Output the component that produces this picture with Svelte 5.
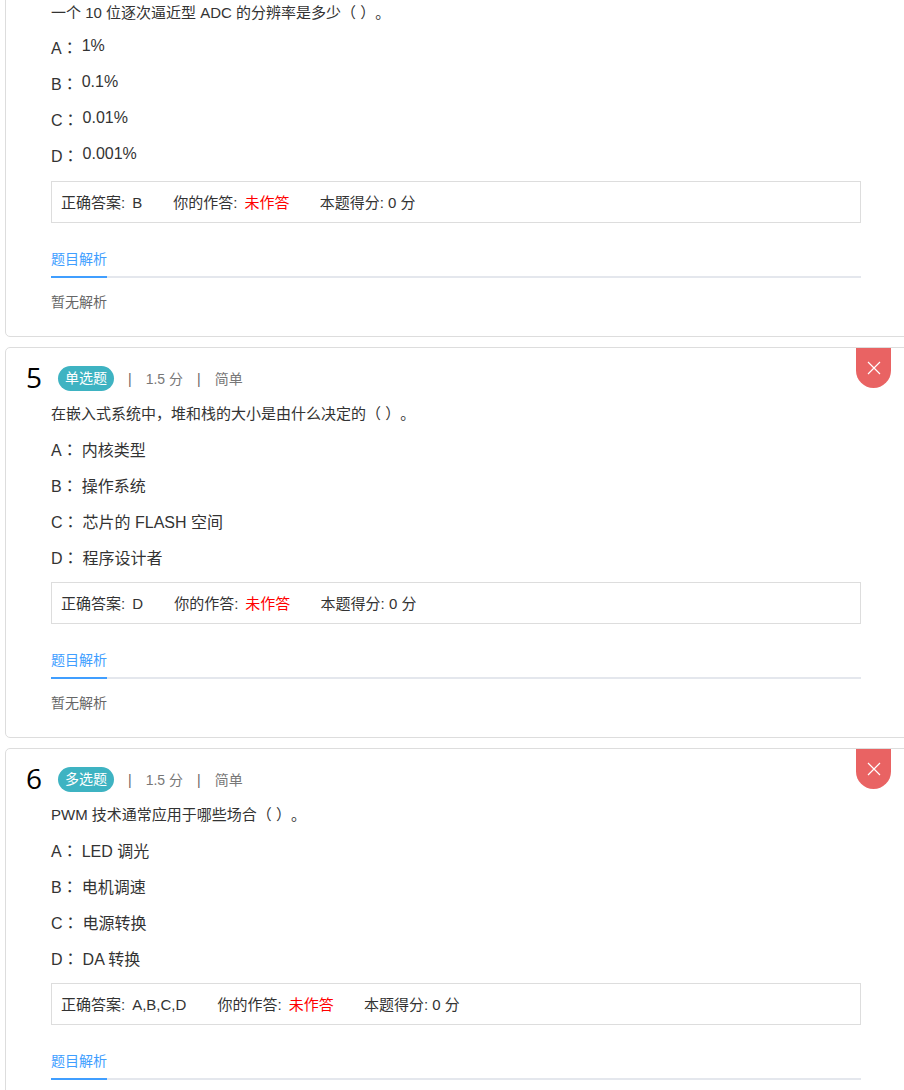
<script>
const questions = [
	{
		no: 4, type: '单选题', score: '1.5', level: '简单',
		title: '一个 10 位逐次逼近型 ADC 的分辨率是多少（ ）。',
		options: ['1%', '0.1%', '0.01%', '0.001%'],
		raised: true, answer: 'B'
	},
	{
		no: 5, type: '单选题', score: '1.5', level: '简单',
		title: '在嵌入式系统中，堆和栈的大小是由什么决定的（ ）。',
		options: ['内核类型', '操作系统', '芯片的 FLASH 空间', '程序设计者'],
		answer: 'D'
	},
	{
		no: 6, type: '多选题', score: '1.5', level: '简单',
		title: 'PWM 技术通常应用于哪些场合（ ）。',
		options: ['LED 调光', '电机调速', '电源转换', 'DA 转换'],
		answer: 'A,B,C,D'
	}
];
const letters = ['A', 'B', 'C', 'D'];
</script>

<div class="list">
	{#each questions as q}
		<section class="card">
			<div class="close">
				<svg width="14" height="14" viewBox="0 0 14 14" fill="none" stroke="#fff" stroke-width="1.2">
					<path d="M1 1L13 13M13 1L1 13" />
				</svg>
			</div>
			<header class="head">
				<span class="no">{q.no}</span>
				<span class="tag">{q.type}</span>
				<span class="sep">|</span>
				<span class="meta">{q.score} 分</span>
				<span class="sep">|</span>
				<span class="meta">{q.level}</span>
			</header>
			<div class="body">
				<p class="title">{q.title}</p>
				{#each q.options as opt, i}
					<div class="option" class:raised={q.raised}>{letters[i]}<span class="colon">：</span><span class="opt-text">{opt}</span></div>
				{/each}
				<div class="result">
					<span class="key">正确答案:</span><span class="val">{q.answer}</span>
					<span class="key">你的作答:</span><span class="val miss">未作答</span>
					<span>本题得分: 0 分</span>
				</div>
				<div class="tabs"><span class="tab">题目解析</span></div>
				<p class="analysis">暂无解析</p>
			</div>
		</section>
	{/each}
</div>

<style>
	:global(html), :global(body) {
		margin: 0;
		height: 1090px;
		overflow: hidden;
		background: #fff;
	}

	.list {
		margin-top: -54px;
		padding-left: 5px;
		font-family: "Liberation Sans", "Noto Sans CJK SC", sans-serif;
		font-size: 14px;
		color: #333;
		text-spacing-trim: space-all;
	}

	.card {
		position: relative;
		box-sizing: border-box;
		width: 960px;
		height: 391px;
		margin-bottom: 10px;
		border: 1px solid #ddd;
		border-radius: 5px;
	}

	.close {
		position: absolute;
		top: 0;
		left: 850px;
		width: 35px;
		height: 40px;
		display: flex;
		align-items: center;
		justify-content: center;
		background: #e96363;
		border-radius: 0 0 17.5px 17.5px;
	}

	.head {
		display: flex;
		align-items: center;
		height: 25px;
		padding: 18px 0 0 20px;
	}

	.no {
		width: 32px;
		padding-bottom: 2px;
		font-family: "Open Sans", sans-serif;
		font-size: 28px;
		line-height: 21px;
		color: #000;
	}

	.tag {
		width: 56px;
		height: 25px;
		line-height: 24px;
		text-align: center;
		color: #fff;
		background: #3eb3c2;
		border-radius: 13px;
	}

	.sep {
		margin: 0 14px 0 14px;
		padding-top: 2px;
		line-height: 25px;
		color: #666;
	}

	.meta {
		padding-top: 2px;
		line-height: 25px;
		color: #777;
	}

	.body {
		width: 810px;
		padding-left: 45px;
	}

	.title {
		margin: 13px 0 0;
		line-height: 20px;
		font-size: 15px;
	}

	.option {
		margin-top: 13px;
		height: 23px;
		line-height: 25px;
		font-size: 16px;
	}

	.option.raised {
		line-height: 23px;
	}

	.colon {
		font-family: "Noto Sans CJK TC", sans-serif;
	}

	.opt-text {
		margin-left: 4px;
	}

	.option.raised .opt-text {
		display: inline-block;
		vertical-align: 3px;
		line-height: 0;
	}

	.result {
		box-sizing: border-box;
		height: 42px;
		margin-top: 14px;
		padding-left: 9px;
		line-height: 41px;
		font-size: 15px;
		border: 1px solid #ddd;
	}

	.key {
		margin-right: 7px;
	}

	.val {
		margin-right: 27px;
	}

	.miss {
		margin-right: 26px;
		color: #f00;
	}

	.tabs {
		height: 30px;
		margin-top: 23px;
		border-bottom: 2px solid #e4e7ed;
		line-height: 26px;
		font-size: 14px;
	}

	.tab {
		display: inline-block;
		height: 30px;
		color: #409eff;
		border-bottom: 2px solid #409eff;
	}

	.analysis {
		margin: 14px 0 0;
		line-height: 20px;
		font-size: 14px;
		color: #666;
	}
</style>
